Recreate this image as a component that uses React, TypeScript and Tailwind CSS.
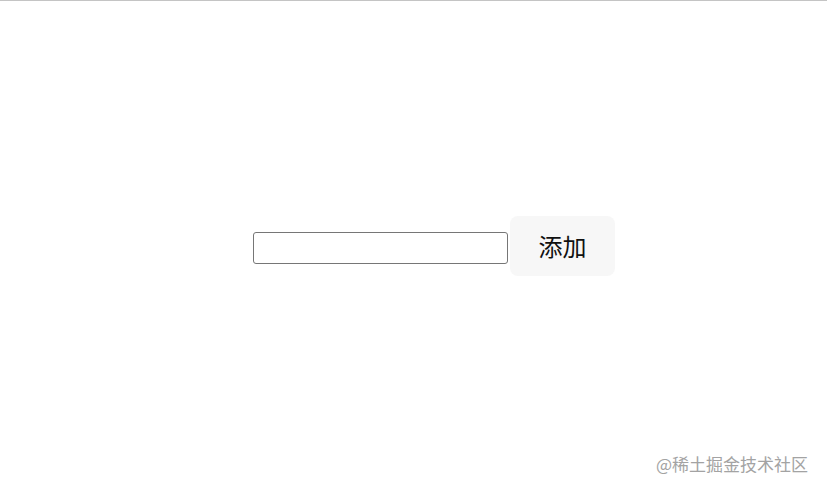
import React from "react";

export default function App() {
  return (
    <div
      className="relative h-[489px] w-[827px] overflow-hidden bg-white border-t border-[#c4c4c4]"
      style={{ fontFamily: '"Noto Sans CJK SC", "Noto Sans", sans-serif' }}
    >
      <div className="flex h-[487px] items-center pl-[253px] pt-[3px]">
        <input
          type="text"
          className="mt-[4px] h-[32px] w-[255px] rounded-[3px] border border-[#767676] bg-white px-1 outline-none"
        />
        <button className="ml-[2px] h-[60px] w-[105px] rounded-[8px] bg-[#f7f7f7] text-[24px] leading-none text-[#111]">
          添加
        </button>
      </div>
      <div className="absolute right-[19px] bottom-[17px] text-[17px] leading-none text-[#a3a3a3]">
        @稀土掘金技术社区
      </div>
    </div>
  );
}
